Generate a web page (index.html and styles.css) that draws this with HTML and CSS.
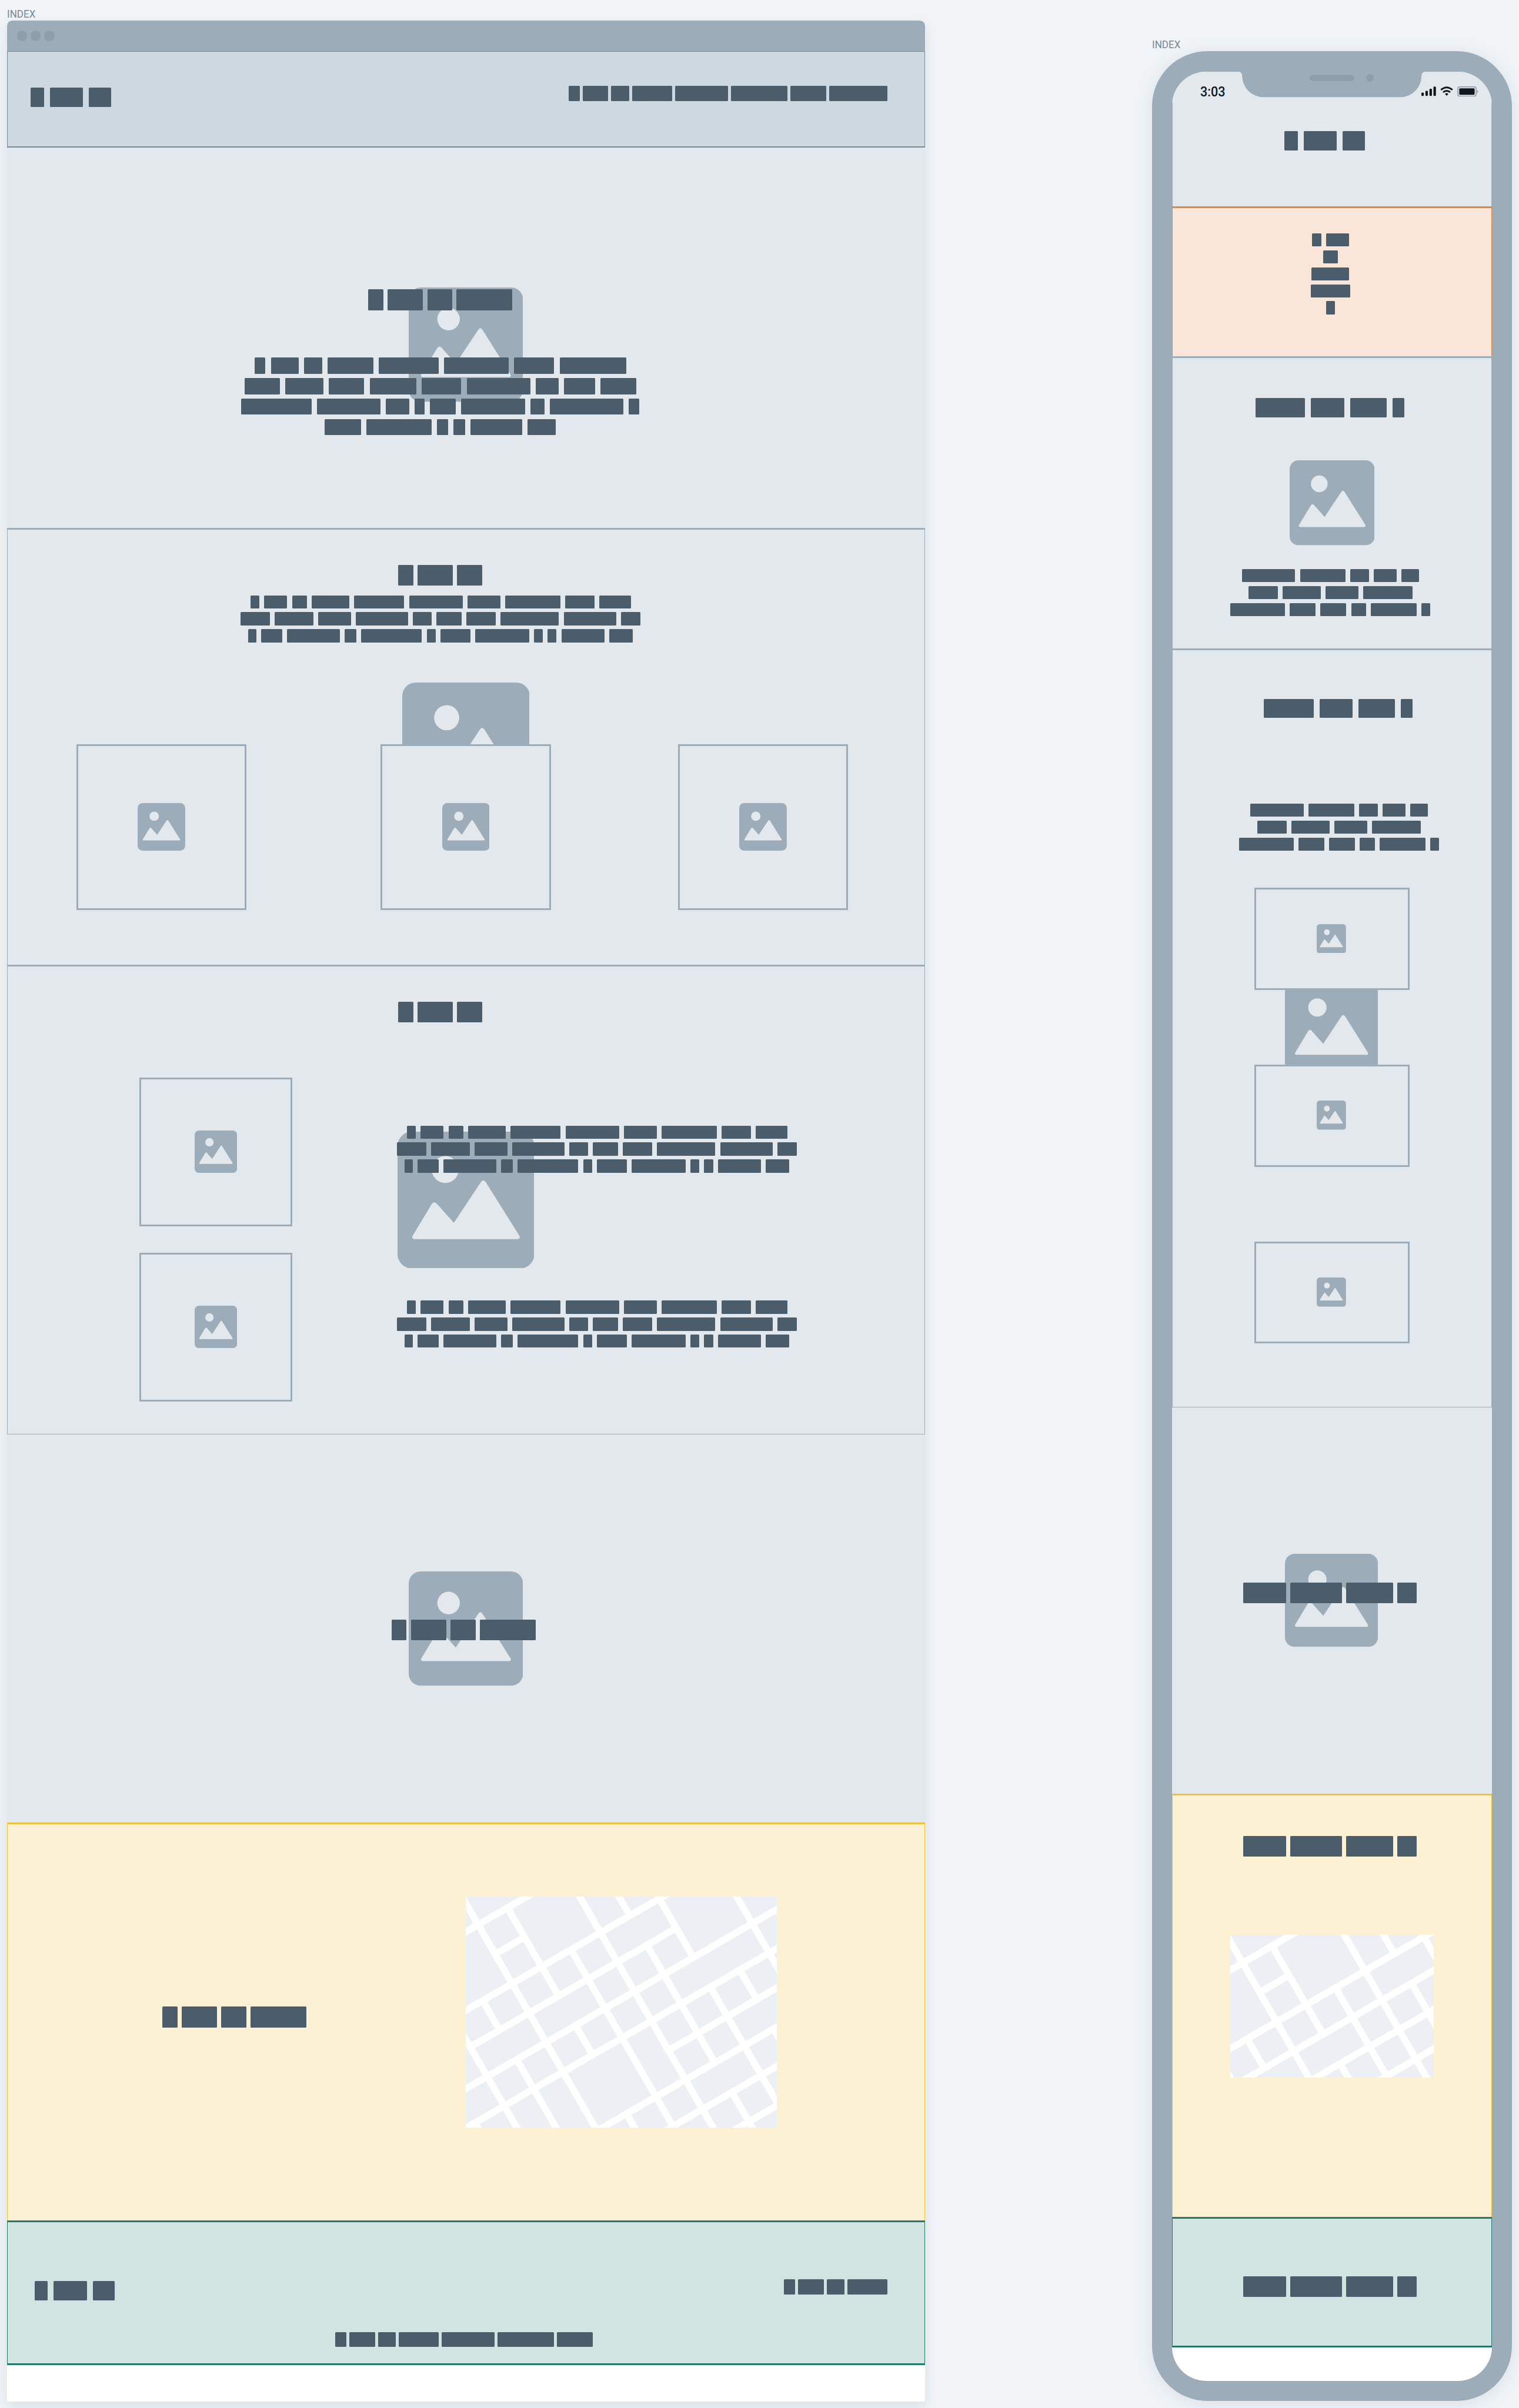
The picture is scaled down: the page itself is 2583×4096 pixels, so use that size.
FILE: index.html
```html
<!DOCTYPE html>
<html lang="en">
<head>
<meta charset="utf-8">
<title>Index wireframes</title>
<link rel="stylesheet" href="styles.css">
</head>
<body>
<svg class="defs" aria-hidden="true">
  <symbol id="picture" viewBox="0 0 200 200">
    <rect width="200" height="200" rx="21" fill="#9dacb9"/>
    <g fill="#e3e8ec">
      <circle cx="69.7" cy="55.3" r="19.7"/>
      <path d="M25 157Q20 156.5 22 152.3L49.8 106.2Q53.7 100.5 58 106L82.3 133.2L121 75Q125.2 67.5 129.7 75L178.2 152.3Q180 156.8 175 157Z"/>
    </g>
  </symbol>
  <g id="streets">
    <rect width="732" height="544" fill="#fff"/>
    <path fill="#eceff4" transform="rotate(-30)" d="M0 0h144v64h-144zM-80 0h64v64h-64zM0 80h64v64h-64zM0 160h64v64h-64zM-176 80h160v144h-160zM80 80h144v144h-144zM240 80h64v144h-64zM320 80h64v144h-64zM400 240h144v144h-144zM240 240h144v64h-144zM560 240h144v144h-144zM560 400h64v64h-64zM320 400h224v64h-224zM320 320h64v64h-64zM240 320h64v64h-64zM160 240h64v64h-64zM80 240h64v64h-64zM0 240h64v64h-64zM-80 240h64v64h-64zM-160 240h64v64h-64zM-320 240h144v144h-144zM-160 320h144v64h-144zM0 320h144v64h-144zM160 320h64v64h-64zM240 400h64v64h-64zM160 400h64v64h-64zM80 400h64v64h-64zM0 400h64v64h-64zM-80 400h64v64h-64zM-160 400h64v64h-64zM-320 400h144v64h-144zM240 480h64v64h-64zM320 480h64v64h-64zM400 480h64v64h-64zM480 480h64v64h-64zM560 480h64v64h-64zM400 560h224v64h-224zM320 560h64v64h-64zM240 560h64v64h-64zM160 480h64v144h-64zM0 480h144v144h-144zM-80 480h64v144h-64zM-160 480h64v144h-64zM-240 480h64v64h-64zM160 640h64v64h-64zM80 640h64v64h-64zM0 640h64v64h-64zM240 640h144v64h-144zM400 640h64v64h-64zM400 720h64v64h-64zM320 720h64v64h-64zM240 720h64v64h-64zM160 720h64v64h-64zM320 800h64v64h-64zM240 800h64v64h-64z"/>
  </g>
</svg>

<main class="canvas">
  <section class="board board-desktop">
    <h2 class="board-label"><span>INDEX</span></h2>
    <div class="browser">
      <div class="browser-bar"><b></b><b></b><b></b></div>

      <header class="block d-header">
        <div class="words logo"><div class="line"><i style="--w:31"></i><i style="--w:78"></i><i style="--w:51.6"></i></div></div>
        <nav class="words links"><div class="line"><i style="--w:26"></i><i style="--w:60.5"></i><i style="--w:42"></i><i style="--w:94"></i><i style="--w:125"></i><i style="--w:132"></i><i style="--w:85"></i><i style="--w:137"></i></div></nav>
      </header>

      <section class="block d-hero">
        <svg class="backdrop"><use href="#picture"/></svg>
        <div class="words display"><div class="line"><i style="--w:35.4"></i><i style="--w:84"></i><i style="--w:58.6"></i><i style="--w:132"></i></div></div>
        <div class="words lead">
          <div class="line"><i style="--w:26"></i><i style="--w:65.7"></i><i style="--w:43"></i><i style="--w:106.7"></i><i style="--w:141.8"></i><i style="--w:152.2"></i><i style="--w:94"></i><i style="--w:156.8"></i></div>
          <div class="line"><i style="--w:83.3"></i><i style="--w:89.8"></i><i style="--w:83.3"></i><i style="--w:110"></i><i style="--w:93"></i><i style="--w:149.4"></i><i style="--w:54"></i><i style="--w:72.9"></i><i style="--w:84.4"></i></div>
          <div class="line"><i style="--w:165.7"></i><i style="--w:149.4"></i><i style="--w:55.3"></i><i style="--w:22.6"></i><i style="--w:60.3"></i><i style="--w:150.6"></i><i style="--w:33.8"></i><i style="--w:172.2"></i><i style="--w:25.4"></i></div>
          <div class="line"><i style="--w:85.7"></i><i style="--w:153.5"></i><i style="--w:25.4"></i><i style="--w:27.3"></i><i style="--w:121.6"></i><i style="--w:67"></i></div>
        </div>
      </section>

      <section class="block ruled d-services">
        <svg class="backdrop"><use href="#picture"/></svg>
        <div class="words display"><div class="line"><i style="--w:35.4"></i><i style="--w:84"></i><i style="--w:58.6"></i></div></div>
        <div class="words copy">
          <div class="line"><i style="--w:21.5"></i><i style="--w:54"></i><i style="--w:35.4"></i><i style="--w:88.5"></i><i style="--w:117.7"></i><i style="--w:125.9"></i><i style="--w:78"></i><i style="--w:130"></i><i style="--w:68.3"></i><i style="--w:74.2"></i></div>
          <div class="line"><i style="--w:69.3"></i><i style="--w:91"></i><i style="--w:76.8"></i><i style="--w:123.9"></i><i style="--w:43.6"></i><i style="--w:59.2"></i><i style="--w:69"></i><i style="--w:137.6"></i><i style="--w:123.6"></i><i style="--w:46"></i></div>
          <div class="line"><i style="--w:18.2"></i><i style="--w:49.8"></i><i style="--w:124.5"></i><i style="--w:27.5"></i><i style="--w:143"></i><i style="--w:21"></i><i style="--w:70.6"></i><i style="--w:127"></i><i style="--w:20.5"></i><i style="--w:21.5"></i><i style="--w:101"></i><i style="--w:55.3"></i></div>
        </div>
        <div class="cards">
          <div class="card"><svg><use href="#picture"/></svg></div>
          <div class="card"><svg><use href="#picture"/></svg></div>
          <div class="card"><svg><use href="#picture"/></svg></div>
        </div>
      </section>

      <section class="block ruled d-features">
        <svg class="backdrop"><use href="#picture"/></svg>
        <div class="words display"><div class="line"><i style="--w:35.4"></i><i style="--w:84"></i><i style="--w:58.6"></i></div></div>
        <div class="feature">
          <div class="card"><svg><use href="#picture"/></svg></div>
          <div class="words copy">
            <div class="line"><i style="--w:21.5"></i><i style="--w:54"></i><i style="--w:35.4"></i><i style="--w:88.5"></i><i style="--w:117.7"></i><i style="--w:125.9"></i><i style="--w:78"></i><i style="--w:130"></i><i style="--w:68.3"></i><i style="--w:74.2"></i></div>
            <div class="line"><i style="--w:69.3"></i><i style="--w:91"></i><i style="--w:76.8"></i><i style="--w:123.9"></i><i style="--w:43.6"></i><i style="--w:59.2"></i><i style="--w:69"></i><i style="--w:137.6"></i><i style="--w:123.6"></i><i style="--w:46"></i></div>
            <div class="line"><i style="--w:18.2"></i><i style="--w:49.8"></i><i style="--w:124.5"></i><i style="--w:27.5"></i><i style="--w:143"></i><i style="--w:21"></i><i style="--w:70.6"></i><i style="--w:127"></i><i style="--w:20.5"></i><i style="--w:21.5"></i><i style="--w:101"></i><i style="--w:55.3"></i></div>
          </div>
        </div>
        <div class="feature">
          <div class="card"><svg><use href="#picture"/></svg></div>
          <div class="words copy">
            <div class="line"><i style="--w:21.5"></i><i style="--w:54"></i><i style="--w:35.4"></i><i style="--w:88.5"></i><i style="--w:117.7"></i><i style="--w:125.9"></i><i style="--w:78"></i><i style="--w:130"></i><i style="--w:68.3"></i><i style="--w:74.2"></i></div>
            <div class="line"><i style="--w:69.3"></i><i style="--w:91"></i><i style="--w:76.8"></i><i style="--w:123.9"></i><i style="--w:43.6"></i><i style="--w:59.2"></i><i style="--w:69"></i><i style="--w:137.6"></i><i style="--w:123.6"></i><i style="--w:46"></i></div>
            <div class="line"><i style="--w:18.2"></i><i style="--w:49.8"></i><i style="--w:124.5"></i><i style="--w:27.5"></i><i style="--w:143"></i><i style="--w:21"></i><i style="--w:70.6"></i><i style="--w:127"></i><i style="--w:20.5"></i><i style="--w:21.5"></i><i style="--w:101"></i><i style="--w:55.3"></i></div>
          </div>
        </div>
      </section>

      <section class="block d-banner">
        <svg class="backdrop"><use href="#picture"/></svg>
        <div class="words display"><div class="line"><i style="--w:35.4"></i><i style="--w:84"></i><i style="--w:58.6"></i><i style="--w:132"></i></div></div>
      </section>

      <section class="block ruled yellow d-contact">
        <div class="words display"><div class="line"><i style="--w:35.4"></i><i style="--w:84"></i><i style="--w:58.6"></i><i style="--w:132"></i></div></div>
        <svg class="map" viewBox="0 0 732 544"><use href="#streets"/></svg>
      </section>

      <footer class="block ruled green d-footer">
        <div class="footer-row">
          <div class="words logo"><div class="line"><i style="--w:31"></i><i style="--w:78"></i><i style="--w:51.6"></i></div></div>
          <div class="words links"><div class="line"><i style="--w:26"></i><i style="--w:60.5"></i><i style="--w:42"></i><i style="--w:94"></i></div></div>
        </div>
        <div class="words links footer-links"><div class="line"><i style="--w:26"></i><i style="--w:60.5"></i><i style="--w:42"></i><i style="--w:94"></i><i style="--w:125"></i><i style="--w:132"></i><i style="--w:85"></i></div></div>
      </footer>
    </div>
  </section>

  <section class="board board-phone">
    <h2 class="board-label"><span>INDEX</span></h2>
    <div class="phone">
      <div class="screen">
        <div class="notch">
          <svg viewBox="0 0 442 60"><path fill="#9dacb9" d="M0-3V0Q10 0 10 10A50 50 0 0 0 60 60H382A50 50 0 0 0 432 10Q432 0 442 0V-3Z"/><rect x="169" y="7.5" width="105" height="14.6" rx="7.3" fill="#8e9eac"/><circle cx="311" cy="14.7" r="9" fill="#8e9eac"/></svg>
        </div>

        <header class="block p-header">
          <div class="status">
            <span class="clock">3:03</span>
            <svg class="indicators" viewBox="0 0 134 24">
              <g fill="#0f171e">
                <rect x="0" y="14.5" width="5.8" height="8" rx="2"/><rect x="9.5" y="10.5" width="5.8" height="12" rx="2"/><rect x="19" y="5.5" width="5.8" height="17" rx="2"/><rect x="28.4" y=".5" width="5.8" height="22" rx="2"/>
                <rect x="89" y="4.6" width="36.3" height="15" rx="2"/>
                <path d="M59.5 22L55.5 17.6Q59.5 14.4 63.5 17.6Z"/>
              </g>
              <g fill="none" stroke="#0f171e" stroke-width="4">
                <path d="M46.2 8.2Q59.5-3.4 72.8 8.2"/><path d="M51.2 13.8Q59.5 7.2 67.8 13.8"/>
              </g>
              <rect x="85.8" y="1" width="43" height="22" rx="4.5" fill="none" stroke="#8b9197" stroke-width="2"/>
              <path d="M131 8.2Q133.4 9.5 133.4 12T131 15.8Z" fill="#8b9197"/>
            </svg>
          </div>
          <div class="words logo"><div class="line"><i style="--w:31.5"></i><i style="--w:78"></i><i style="--w:51.6"></i></div></div>
        </header>

        <nav class="block ruled orange p-nav">
          <div class="words copy">
            <div class="line"><i style="--w:21.3"></i><i style="--w:54"></i></div>
            <div class="line"><i style="--w:35.4"></i></div>
            <div class="line"><i style="--w:88.5"></i></div>
            <div class="line"><i style="--w:93"></i></div>
            <div class="line"><i style="--w:21.3"></i></div>
          </div>
        </nav>

        <section class="block ruled p-intro">
          <div class="words logo"><div class="line"><i style="--w:116.7"></i><i style="--w:77.8"></i><i style="--w:85.7"></i><i style="--w:27.5"></i></div></div>
          <svg class="figure"><use href="#picture"/></svg>
          <div class="words copy">
            <div class="line"><i style="--w:125.7"></i><i style="--w:107"></i><i style="--w:44.5"></i><i style="--w:53"></i><i style="--w:42"></i></div>
            <div class="line"><i style="--w:69.3"></i><i style="--w:89.3"></i><i style="--w:77.2"></i><i style="--w:115.6"></i></div>
            <div class="line"><i style="--w:128"></i><i style="--w:61"></i><i style="--w:61"></i><i style="--w:35.5"></i><i style="--w:107"></i><i style="--w:21.5"></i></div>
          </div>
        </section>

        <section class="block ruled p-gallery">
          <svg class="backdrop"><use href="#picture"/></svg>
          <div class="words logo"><div class="line"><i style="--w:116.7"></i><i style="--w:77.8"></i><i style="--w:85.7"></i><i style="--w:27.5"></i></div></div>
          <div class="words copy">
            <div class="line"><i style="--w:125.7"></i><i style="--w:107"></i><i style="--w:44.5"></i><i style="--w:53"></i><i style="--w:42"></i></div>
            <div class="line"><i style="--w:69.3"></i><i style="--w:89.3"></i><i style="--w:77.2"></i><i style="--w:115.6"></i></div>
            <div class="line"><i style="--w:128"></i><i style="--w:61"></i><i style="--w:61"></i><i style="--w:35.5"></i><i style="--w:107"></i><i style="--w:21.5"></i></div>
          </div>
          <div class="stack">
            <div class="card"><svg><use href="#picture"/></svg></div>
            <div class="card"><svg><use href="#picture"/></svg></div>
            <div class="card"><svg><use href="#picture"/></svg></div>
          </div>
        </section>

        <section class="block p-banner">
          <svg class="backdrop"><use href="#picture"/></svg>
          <div class="words display"><div class="line"><i style="--w:102"></i><i style="--w:120.8"></i><i style="--w:111"></i><i style="--w:45.7"></i></div></div>
        </section>

        <section class="block ruled yellow p-contact">
          <div class="words display"><div class="line"><i style="--w:102"></i><i style="--w:120.8"></i><i style="--w:111"></i><i style="--w:45.7"></i></div></div>
          <svg class="map" viewBox="0 0 480 336"><use href="#streets"/></svg>
        </section>

        <footer class="block ruled green p-footer">
          <div class="words display"><div class="line"><i style="--w:102"></i><i style="--w:120.8"></i><i style="--w:111"></i><i style="--w:45.7"></i></div></div>
        </footer>
      </div>
    </div>
  </section>
</main>
</body>
</html>
```

FILE: styles.css
```css
/* 1rem is 100 design units */
html {
  font-size: 72.272px;
}

* {
  box-sizing: border-box;
}

body {
  margin: 0;
  background: #f0f4f7;
  font-family: Roboto, "Liberation Sans", sans-serif;
}

svg {
  display: block;
}

.defs {
  position: absolute;
  width: 0;
  height: 0;
}

.canvas {
  display: flex;
  align-items: flex-start;
  gap: 5.34rem;
  width: 2583px;
  height: 4096px;
  padding-left: .16rem;
  overflow: hidden;
}

.board-phone {
  padding-top: .73rem;
}

.board-label {
  height: .48rem;
  margin: 0;
  padding: .19rem 0 0 .01rem;
  font-size: .265rem;
  line-height: .29rem;
  font-weight: 400;
  color: #788896;
}

.board-label span {
  display: inline-block;
  transform: scaleX(.89);
  transform-origin: 0 50%;
}

/* Placeholder words */
.words {
  display: flex;
  flex-direction: column;
  align-items: center;
}

.line {
  display: flex;
}

.line i {
  width: calc(var(--w) * .01rem);
  background: #4b5c6a;
  border-radius: 1.5px;
}

.logo .line { gap: .14rem; }
.logo i { height: .45rem; }
.links .line { gap: .07rem; }
.links i { height: .35rem; }
.display .line { gap: .098rem; }
.display i { height: .49rem; }
.lead { gap: .1rem; }
.lead .line { gap: .127rem; }
.lead i { height: .38rem; }
.copy { gap: .09rem; }
.copy .line { gap: .113rem; }
.copy i { height: .31rem; }

/* Page blocks */
.block {
  position: relative;
  isolation: isolate;
  display: flex;
  flex-direction: column;
  align-items: center;
  background: #e3e8ec;
}

.ruled {
  border: 1px solid #9dacb9;
  border-width: 3px 1px 0;
}

.yellow {
  background: #fdf1d3;
  border-color: #f0c239;
}

.green {
  background: #d1e4e1;
  border-color: #20796a;
  border-bottom-width: 3px;
}

.orange {
  background: #fae6d9;
  border-color: #e6853c;
}

.backdrop {
  position: absolute;
  z-index: -1;
}

.card {
  display: flex;
  align-items: center;
  justify-content: center;
  background: #e3e8ec;
  border: 3px solid #9dacb9;
}

/* Desktop */
.browser {
  width: 21.6rem;
  height: 56.04rem;
  background: #fff;
  border-radius: .12rem .12rem 0 0;
  box-shadow: 0 .12rem .3rem rgba(80, 100, 120, .13);
}

.browser-bar {
  display: flex;
  align-items: center;
  gap: .08rem;
  height: .73rem;
  padding-left: .24rem;
  background: #9dacb9;
  border-radius: .12rem .12rem 0 0;
}

.browser-bar b {
  width: .24rem;
  height: .24rem;
  border-radius: 50%;
  background: #8e9eac;
}

.d-header {
  flex-direction: row;
  align-items: flex-start;
  justify-content: space-between;
  height: 2.27rem;
  padding: .8rem .865rem 0 .55rem;
  background: #ced8e1;
  border: 1px solid #788896;
  border-bottom-width: 2px;
}

.d-header .logo { margin-top: .04rem; }

.d-hero {
  height: 8.94rem;
  padding: 3.33rem 1.2rem 0 0;
}

.d-hero .backdrop {
  left: 9.455rem;
  top: 3.29rem;
  width: 2.69rem;
  height: 2.69rem;
}

.d-hero .lead { margin-top: 1.12rem; }

.d-services {
  height: 10.28rem;
  padding-top: .83rem;
}

.d-services .display { margin-right: 1.21rem; }
.d-services .copy { margin: .23rem 1.19rem 0 0; }

.d-services .backdrop {
  left: 9.285rem;
  top: 3.61rem;
  width: 3rem;
  height: 3rem;
}

.cards {
  display: flex;
  align-self: flex-start;
  gap: 3rem;
  margin: 2.4rem 0 0 1.625rem;
}

.cards .card {
  width: 4rem;
  height: 3.9rem;
}

.cards .card:nth-child(2) { margin-left: .16rem; }

.cards svg {
  width: 1.12rem;
  height: 1.12rem;
  margin-bottom: .02rem;
}

.d-features {
  height: 11.06rem;
  padding-top: .83rem;
  border-bottom-width: 1px;
}

.d-features .display { margin: 0 1.21rem .68rem 0; }

.d-features .backdrop {
  left: 9.175rem;
  top: 3.89rem;
  width: 3.22rem;
  height: 3.22rem;
}

.feature {
  display: flex;
  align-self: flex-start;
  align-items: center;
  gap: 2.46rem;
  margin: .62rem 0 0 3.105rem;
}

.feature .card {
  width: 3.6rem;
  height: 3.5rem;
}

.feature .card svg {
  width: 1rem;
  height: 1rem;
}

.feature .copy { margin-bottom: .13rem; }

.d-banner {
  height: 9.14rem;
  padding: 4.36rem .1rem 0 0;
}

.d-banner .backdrop {
  left: 9.455rem;
  top: 3.23rem;
  width: 2.69rem;
  height: 2.69rem;
}

.d-contact {
  flex-direction: row;
  align-items: flex-start;
  gap: 3.74rem;
  height: 9.36rem;
  padding-left: 3.645rem;
}

.d-contact .words { margin-top: 4.29rem; }

.d-contact .map {
  width: 7.32rem;
  height: 5.44rem;
  margin-top: 1.7rem;
}

.d-footer {
  height: 3.4rem;
  padding-top: 1.35rem;
}

.footer-row {
  display: flex;
  align-self: stretch;
  align-items: flex-start;
  justify-content: space-between;
  padding: 0 .865rem 0 .64rem;
}

.footer-row .logo { margin-top: .04rem; }
.footer-links { margin: .75rem .08rem 0 0; }

/* Phone */
.phone {
  width: 8.48rem;
  height: 55.3rem;
  padding: .485rem .48rem;
  background: #9dacb9;
  border-radius: 1.3rem;
  box-shadow: 0 .06rem .4rem rgba(80, 100, 120, .13);
}

.screen {
  position: relative;
  height: 54.34rem;
  overflow: hidden;
  background: #fff;
  border-radius: .8rem;
}

.notch {
  position: absolute;
  z-index: 1;
  left: 1.54rem;
  top: 0;
}

.notch svg {
  width: 4.42rem;
  height: .6rem;
  overflow: visible;
}

.p-header {
  height: 3.165rem;
  border: solid #9dacb9;
  border-width: 0 1px;
}

.status {
  display: flex;
  align-self: stretch;
  align-items: flex-start;
  justify-content: space-between;
  height: 1.395rem;
  padding: .34rem .3rem 0 .645rem;
}

.clock {
  font-size: .325rem;
  line-height: .26rem;
  font-weight: 500;
  color: #0f171e;
  transform: scaleX(.92);
  transform-origin: 0 50%;
}

.indicators {
  width: 1.34rem;
  height: .24rem;
}

.p-header .logo { margin-right: .35rem; }

.p-nav {
  height: 3.52rem;
  padding: .59rem .07rem 0 0;
}

.p-intro {
  height: 6.88rem;
  padding-top: .95rem;
}

.p-intro .logo { margin-right: .1rem; }

.figure {
  width: 2rem;
  height: 2rem;
  margin: 1.02rem 0 .55rem;
}

.p-intro .copy { margin-right: .07rem; }

.p-gallery {
  height: 17.86rem;
  padding-top: 1.15rem;
  border-bottom-width: 1px;
}

.p-gallery .backdrop {
  left: 2.64rem;
  top: 7.8rem;
  width: 2.19rem;
  height: 2.19rem;
}

.p-gallery .logo { margin-left: .3rem; }
.p-gallery .copy { margin: 2.01rem 0 0 .34rem; }

.stack {
  display: flex;
  flex-direction: column;
  gap: 1.76rem;
  margin-top: .88rem;
}

.stack .card {
  width: 3.64rem;
  height: 2.4rem;
}

.stack svg {
  width: .69rem;
  height: .69rem;
  margin: 0 .02rem .02rem 0;
}

.p-banner {
  height: 9.1rem;
  padding: 4.13rem .1rem 0 0;
}

.p-banner .backdrop {
  left: 2.655rem;
  top: 3.455rem;
  width: 2.19rem;
  height: 2.19rem;
}

.p-contact {
  height: 9.96rem;
  padding-top: .95rem;
}

.p-contact .words { margin-right: .1rem; }

.p-contact .map {
  width: 4.8rem;
  height: 3.36rem;
  margin-top: 1.84rem;
}

.p-footer {
  height: 3.075rem;
  padding: 1.35rem .1rem 0 0;
}
```
